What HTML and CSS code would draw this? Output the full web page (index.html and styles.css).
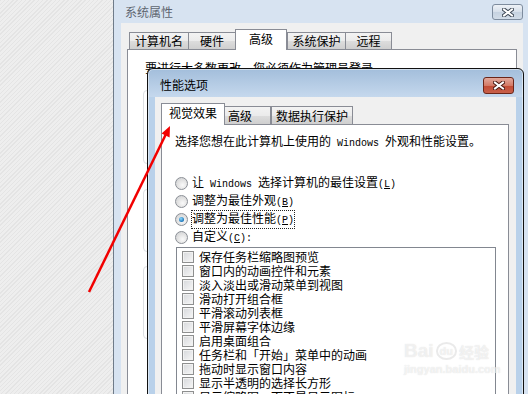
FILE: index.html
```html
<!DOCTYPE html>
<html>
<head>
    <meta charset="utf-8">
    <title>性能选项</title>
    <link rel="stylesheet" href="styles.css">
</head>
<body>
    <div class="desktop">
        <div class="window sys-window">
            <div class="titlebar">
                <span class="title">系统属性</span>
                <div class="close-btn">
                    <svg width="12" height="9" viewBox="0 0 12 9">
                        <path d="M2 1.5 L10 7.5 M10 1.5 L2 7.5" stroke="#3c4654" stroke-width="4" stroke-linecap="square"/>
                        <path d="M2 1.5 L10 7.5 M10 1.5 L2 7.5" stroke="#fff" stroke-width="2" stroke-linecap="square"/>
                    </svg>
                </div>
            </div>
            <div class="client">
                <div class="tabs">
                    <div class="tab" style="width: 60px">计算机名</div>
                    <div class="tab" style="width: 48px">硬件</div>
                    <div class="tab active" style="width: 52px">高级</div>
                    <div class="tab next" style="width: 59px">系统保护</div>
                    <div class="tab" style="width: 47px">远程</div>
                </div>
                <div class="panel">
                    <p class="notice">要进行大多数更改，您必须作为管理员登录。</p>
                    <div class="group g1"></div>
                    <div class="group g2"></div>
                    <div class="group g3"></div>
                </div>
            </div>
        </div>

        <div class="window perf-window">
            <div class="titlebar">
                <span class="title">性能选项</span>
                <div class="close-btn red">
                    <svg width="12" height="9" viewBox="0 0 12 9">
                        <path d="M2 1.5 L10 7.5 M10 1.5 L2 7.5" stroke="#4a1a12" stroke-width="4" stroke-linecap="square"/>
                        <path d="M2 1.5 L10 7.5 M10 1.5 L2 7.5" stroke="#fff" stroke-width="2" stroke-linecap="square"/>
                    </svg>
                </div>
            </div>
            <div class="client">
                <div class="tabs">
                    <div class="tab active" style="width: 64px">视觉效果</div>
                    <div class="tab tab-left" style="width: 47px">高级</div>
                    <div class="tab next" style="width: 82px">数据执行保护</div>
                </div>
                <div class="panel">
                    <p class="intro">选择您想在此计算机上使用的<span class="mono"> Windows </span>外观和性能设置。</p>

                    <div class="radios">
                        <div class="radio-row"><span class="radio"></span><span>让<span class="mono"> Windows </span>选择计算机的最佳设置<span class="mono">(<u>L</u>)</span></span></div>
                        <div class="radio-row"><span class="radio"></span><span>调整为最佳外观<span class="mono">(<u>B</u>)</span></span></div>
                        <div class="radio-row"><span class="radio checked"></span><span class="focus">调整为最佳性能<span class="mono">(<u>P</u>)</span></span></div>
                        <div class="radio-row"><span class="radio"></span><span>自定义<span class="mono">(<u>C</u>):</span></span></div>
                    </div>

                    <div class="listbox">
                        <div class="check-row"><span class="checkbox"></span>保存任务栏缩略图预览</div>
                        <div class="check-row"><span class="checkbox"></span>窗口内的动画控件和元素</div>
                        <div class="check-row"><span class="checkbox"></span>淡入淡出或滑动菜单到视图</div>
                        <div class="check-row"><span class="checkbox"></span>滑动打开组合框</div>
                        <div class="check-row"><span class="checkbox"></span>平滑滚动列表框</div>
                        <div class="check-row"><span class="checkbox"></span>平滑屏幕字体边缘</div>
                        <div class="check-row"><span class="checkbox"></span>启用桌面组合</div>
                        <div class="check-row"><span class="checkbox"></span>任务栏和「开始」菜单中的动画</div>
                        <div class="check-row"><span class="checkbox"></span>拖动时显示窗口内容</div>
                        <div class="check-row"><span class="checkbox"></span>显示半透明的选择长方形</div>
                        <div class="check-row"><span class="checkbox"></span>显示缩略图，而不是显示图标</div>
                    </div>
                </div>
            </div>
        </div>

        <svg class="arrow" width="528" height="394" viewBox="0 0 528 394">
            <line x1="89" y1="292" x2="166" y2="134" stroke="#f20000" stroke-width="2.5"/>
            <polygon points="170,126 169.6,137.5 161.6,133.4" fill="#f20000"/>
        </svg>

        <div class="watermark">
            <div class="wm-logo"><span class="wm-bai">Bai</span><span class="wm-du">du</span><span class="wm-jy">经验</span></div>
            <div class="wm-url">jingyan.baidu.com</div>
        </div>
    </div>
</body>
</html>
```

FILE: styles.css
```css
body {
    margin: 0;
    overflow: hidden;
    font-family: "Noto Sans CJK SC", sans-serif;
    font-size: 12px;
    color: #000;
}

.desktop {
    position: relative;
    width: 528px;
    height: 394px;
    overflow: hidden;
    background: repeating-linear-gradient(135deg, #e4e4e4 0, #e4e4e4 1px, #eeeeee 1px, #eeeeee 3px);
}

.window {
    position: absolute;
    box-sizing: border-box;
}

.mono {
    font-family: "Liberation Mono", monospace;
    font-size: 10px;
}

/* outer window, inactive */

.sys-window {
    left: 113px;
    top: -1px;
    width: 418px;
    height: 420px;
    border: 1px solid #6f7b89;
    background: #d7e3f1;
}

.titlebar {
    display: flex;
    align-items: flex-start;
}

.sys-window .titlebar {
    height: 23px;
    padding-left: 11px;
}

.sys-window .title {
    line-height: 23px;
    color: #5e6670;
}

.close-btn {
    box-sizing: border-box;
    width: 31px;
    height: 16px;
    margin-left: auto;
    margin-top: 4px;
    margin-right: 7px;
    border: 1px solid #7e8c9e;
    border-radius: 3px;
    background: linear-gradient(to bottom, #eef2f7, #d6dfea 50%, #c6d2e0 51%, #d2dce8);
    display: flex;
    align-items: center;
    justify-content: center;
}

.client {
    background: #f0f0f0;
    margin: 0 7px;
    padding: 6px 6px 0 6px;
    height: 420px;
}

.tabs {
    display: flex;
    align-items: flex-end;
    height: 20px;
    padding-left: 2px;
}

.tab {
    box-sizing: border-box;
    height: 17px;
    margin-left: -1px;
    border: 1px solid #898c95;
    border-bottom: none;
    background: linear-gradient(to bottom, #f3f3f3, #ebebeb 50%, #dddddd 51%, #cfcfcf);
    line-height: 16px;
    text-align: center;
    white-space: nowrap;
}

.tab:first-child {
    margin-left: 0;
}

.tab.next {
    margin-left: 0;
}

.tab.active {
    position: relative;
    z-index: 1;
    height: 21px;
    margin-bottom: -1px;
    background: #fff;
    line-height: 17px;
}

.panel {
    box-sizing: border-box;
    border: 1px solid #898c95;
    background: #fff;
    height: 420px;
}

.notice {
    margin: 0;
    padding: 10px 0 0 17px;
    line-height: 16px;
}

.group {
    margin-left: 15px;
    width: 360px;
    border: 1px solid #dcdfe3;
    border-radius: 4px;
}

.g1 {
    margin-top: 14px;
    height: 72px;
}

.g2 {
    margin-top: 25px;
    height: 61px;
}

.g3 {
    margin-top: 14px;
    height: 71px;
}

/* performance options, active */

.perf-window {
    left: 147px;
    top: 68px;
    width: 377px;
    height: 340px;
    border: 1px solid #111;
    border-radius: 6px 6px 0 0;
    background: linear-gradient(to bottom, #a3bedb, #c5d8ed 28px, #b9d1ea 28px);
    box-shadow: 0 0 0 1px rgba(255, 255, 255, 0.5) inset;
}

.perf-window .titlebar {
    height: 28px;
    padding-left: 12px;
}

.perf-window .title {
    padding-top: 4px;
    line-height: 24px;
}

.perf-window .close-btn {
    margin-top: 8px;
    margin-right: 9px;
    height: 17px;
}

.close-btn.red {
    border-color: #6b2619;
    background: linear-gradient(to bottom, #e2a99c, #d47a66 50%, #c24a33 51%, #c8604a);
}

.perf-window .client {
    padding: 6px 7px 0 6px;
}

.perf-window .tabs {
    height: 21px;
    padding-left: 0;
}

.perf-window .tab {
    height: 18px;
    line-height: 17px;
}

.perf-window .tab.active {
    height: 22px;
    line-height: 18px;
}

.perf-window .tab-left {
    text-align: left;
    padding-left: 3px;
}

.intro {
    margin: 0;
    padding: 8px 0 0 13px;
    line-height: 16px;
}

.radios {
    margin: 22px 0 0 13px;
}

.radio-row {
    display: flex;
    align-items: center;
    gap: 4px;
    height: 18px;
    line-height: 14px;
}

.radio {
    box-sizing: border-box;
    width: 13px;
    height: 13px;
    border: 1px solid #8b8f96;
    border-radius: 50%;
    background: radial-gradient(circle at 60% 65%, #fafafa, #e0e0e0 55%, #c9ccd0);
    display: flex;
    align-items: center;
    justify-content: center;
}

.radio.checked::after {
    content: "";
    width: 5px;
    height: 5px;
    border-radius: 50%;
    background: radial-gradient(circle at 40% 35%, #8fdcff, #1a73b8 70%, #0d4f86);
}

.focus {
    outline: 1px dotted #222;
    outline-offset: 0;
}

.listbox {
    box-sizing: border-box;
    margin: 1px 0 0 14px;
    width: 320px;
    height: 200px;
    border: 1px solid #828790;
    padding: 2px 0 0 5px;
}

.check-row {
    display: flex;
    align-items: center;
    gap: 5px;
    height: 14px;
    line-height: 14px;
    white-space: nowrap;
}

.checkbox {
    box-sizing: border-box;
    width: 12px;
    height: 12px;
    flex: none;
    border: 1px solid #8e8f8f;
    background: linear-gradient(135deg, #d6d8db, #f7f7f7);
    box-shadow: inset 0 0 0 1px #f2f2f2;
}

/* overlays */

.arrow {
    position: absolute;
    left: 0;
    top: 0;
    z-index: 5;
}

.watermark {
    position: absolute;
    left: 404px;
    top: 340px;
    z-index: 4;
    color: rgba(255, 255, 255, 0.6);
    text-shadow: 0 0 1px rgba(150, 150, 150, 0.35);
    font-family: "Liberation Sans", sans-serif;
}

.wm-logo {
    display: flex;
    align-items: center;
    gap: 2px;
}

.wm-bai {
    font-size: 19px;
    font-weight: bold;
}

.wm-du {
    font-size: 11px;
    font-weight: bold;
    border: 2px solid rgba(220, 220, 220, 0.6);
    border-radius: 50%;
    padding: 1px 2px;
}

.wm-jy {
    font-family: "Noto Sans CJK SC", sans-serif;
    font-size: 15px;
    font-weight: bold;
}

.wm-url {
    font-size: 11px;
    font-weight: bold;
    margin-top: 1px;
}
```
